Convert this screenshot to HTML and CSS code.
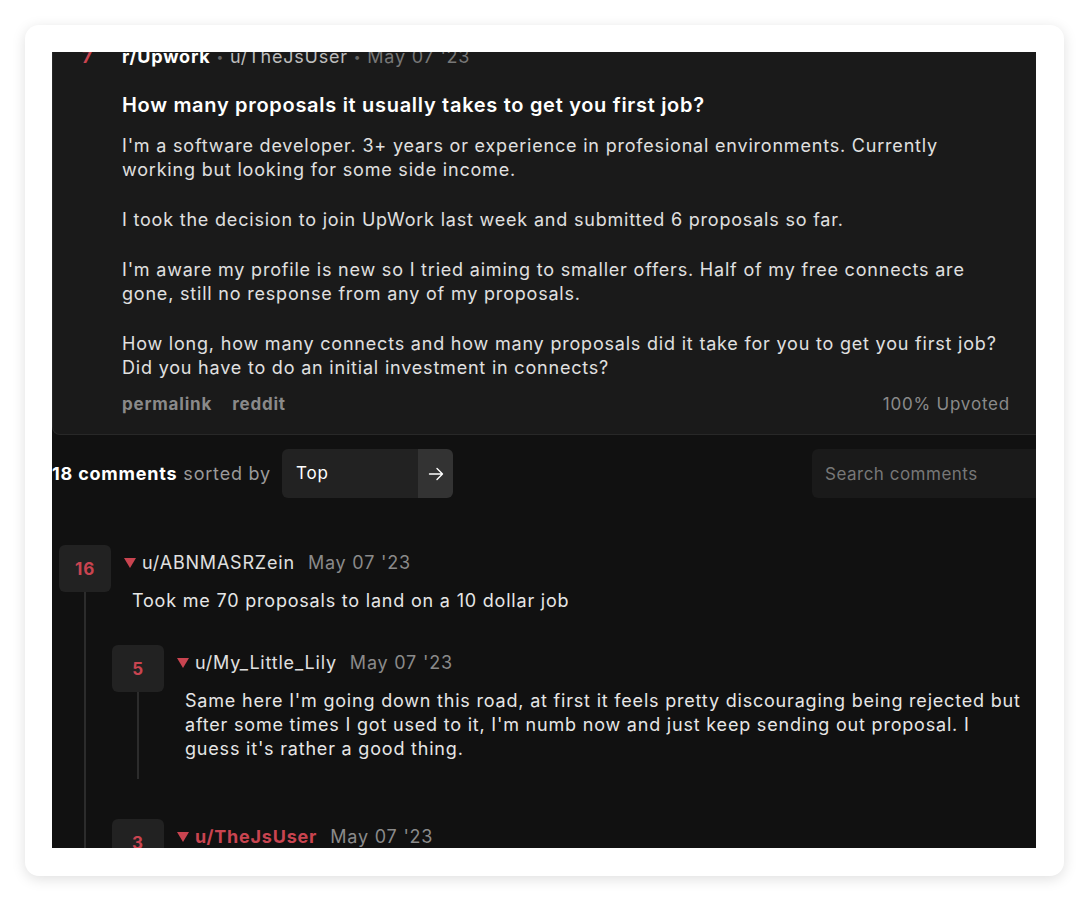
FILE: index.html
```html
<!DOCTYPE html>
<html>
  <head>
    <meta name="viewport" content="width=device-width, initial-scale=1.0" />
    <title>r/Upwork - How many proposals</title>
    <link rel="stylesheet" href="styles.css">
  </head>
  <body>
    <div class="frame">
      <div class="viewport">
        <div class="page">
          <article class="post">
            <div class="post-vote">7</div>
            <div class="post-main">
              <div class="post-meta">
                <span class="sub">r/Upwork</span>
                <span class="dot">•</span>
                <span class="author">u/TheJsUser</span>
                <span class="dot">•</span>
                <span class="date">May 07 '23</span>
              </div>
              <h1 class="post-title">How many proposals it usually takes to get you first job?</h1>
              <div class="post-body">
                <p>I'm a software developer. 3+ years or experience in profesional environments. Currently working but looking for some side income.</p>
                <p>I took the decision to join UpWork last week and submitted 6 proposals so far.</p>
                <p>I'm aware my profile is new so I tried aiming to smaller offers. Half of my free connects are gone, still no response from any of my proposals.</p>
                <p>How long, how many connects and how many proposals did it take for you to get you first job? Did you have to do an initial investment in connects?</p>
              </div>
              <div class="post-footer">
                <a href="#">permalink</a>
                <a href="#">reddit</a>
                <span class="ratio">100% Upvoted</span>
              </div>
            </div>
          </article>

          <div class="comments-bar">
            <span class="count"><b>18 comments</b> sorted by</span>
            <div class="sort">
              <div class="sort-value">Top</div>
              <div class="sort-btn">
                <svg width="18" height="18" viewBox="0 0 18 18" fill="none" stroke="#fff" stroke-width="1.4" stroke-linecap="round" stroke-linejoin="round">
                  <path d="M2.5 9h13M10 3.5L15.5 9 10 14.5" />
                </svg>
              </div>
            </div>
            <input class="search" placeholder="Search comments" />
          </div>

          <div class="comments">
            <div class="comment">
              <div class="vote-col">
                <div class="vote">16</div>
                <div class="thread-line"></div>
              </div>
              <div class="comment-main">
                <div class="comment-head">
                  <span class="caret"></span>
                  <span class="user">u/ABNMASRZein</span>
                  <span class="when">May 07 '23</span>
                </div>
                <div class="comment-body">Took me 70 proposals to land on a 10 dollar job</div>

                <div class="replies">
                  <div class="comment">
                    <div class="vote-col">
                      <div class="vote">5</div>
                      <div class="thread-line"></div>
                    </div>
                    <div class="comment-main">
                      <div class="comment-head">
                        <span class="caret"></span>
                        <span class="user">u/My_Little_Lily</span>
                        <span class="when">May 07 '23</span>
                      </div>
                      <div class="comment-body">Same here I'm going down this road, at first it feels pretty discouraging being rejected but after some times I got used to it, I'm numb now and just keep sending out proposal. I guess it's rather a good thing.</div>
                    </div>
                  </div>

                  <div class="comment">
                    <div class="vote-col">
                      <div class="vote">3</div>
                      <div class="thread-line"></div>
                    </div>
                    <div class="comment-main">
                      <div class="comment-head">
                        <span class="caret"></span>
                        <span class="user op">u/TheJsUser</span>
                        <span class="when">May 07 '23</span>
                      </div>
                      <div class="comment-body">Thanks, that's good to know. I guess I'll keep sending them then.</div>
                    </div>
                  </div>
                </div>
              </div>
            </div>
          </div>
        </div>
      </div>
    </div>
  </body>
</html>
```

FILE: styles.css
```css
body {
  margin: 0;
  background: #fff;
  font-family: Inter, "Noto Sans", sans-serif;
  font-size: 18px;
  letter-spacing: 0.8px;
  color: #e2e2e2;
}

.frame {
  margin: 25px;
  width: 984px;
  height: 796px;
  padding: 27px 28px 28px 27px;
  background: #fff;
  border-radius: 14px;
  box-shadow: 0 3px 14px rgba(0, 0, 0, 0.13);
}

.viewport {
  width: 984px;
  height: 796px;
  overflow: hidden;
  background: #111;
}

/* the page is scrolled a little, so the top of the post is cut */
.page {
  width: 1000px;
  margin-top: -23px;
}

.post {
  display: flex;
  background: #1a1a1a;
  border: 1px solid #282828;
  border-top: none;
  border-radius: 0 0 8px 8px;
  padding: 16px 41px 18px 0;
}

.post-vote {
  width: 69px;
  flex-shrink: 0;
  text-align: center;
  color: #c94450;
  font-weight: 700;
  line-height: 24px;
}

.post-main {
  flex-grow: 1;
}

.post-meta {
  line-height: 24px;
  color: #bdbdbd;
}
.post-meta .sub {
  color: #fff;
  font-weight: 700;
}
.post-meta .dot {
  color: #666;
  font-size: 12px;
  vertical-align: 2px;
}
.post-meta .date {
  color: #777;
}

.post-title {
  margin: 24px 0 0;
  font-size: 20px;
  font-weight: 600;
  letter-spacing: 0.7px;
  line-height: 24px;
  color: #fff;
}

.post-body {
  margin-top: 17px;
  max-width: 884px;
  line-height: 24px;
  color: #e0e0e0;
}
.post-body p {
  margin: 0 0 26px;
}
.post-body p:last-child {
  margin-bottom: 0;
}

.post-footer {
  display: flex;
  margin-top: 12px;
  line-height: 24px;
  color: #8a8a8a;
  font-size: 17px;
}
.post-footer a {
  color: #8a8a8a;
  font-weight: 700;
  text-decoration: none;
  margin-right: 20px;
}
.post-footer .ratio {
  margin-left: auto;
}

.comments-bar {
  display: flex;
  align-items: center;
  margin-top: 14px;
  height: 49px;
}
.count {
  color: #9a9a9a;
}
.count b {
  color: #fff;
}

.sort {
  display: flex;
  height: 49px;
  margin-left: 11px;
  border-radius: 6px;
  overflow: hidden;
}
.sort-value {
  width: 122px;
  padding-left: 14px;
  line-height: 49px;
  background: #222;
  color: #fff;
  font-size: 17px;
}
.sort-btn {
  width: 35px;
  background: #333;
  display: flex;
  align-items: center;
  justify-content: center;
}

.search {
  margin-left: auto;
  width: 240px;
  height: 49px;
  box-sizing: border-box;
  padding: 0 13px;
  border: none;
  border-radius: 6px;
  background: #1a1a1a;
  color: #ddd;
  font-family: inherit;
  font-size: 17px;
  letter-spacing: 0.5px;
  outline: none;
}
.search::placeholder {
  color: #777;
}

.comments {
  padding: 47px 0 0 7px;
}

.comment {
  display: grid;
  grid-template-columns: 52px 1fr;
  column-gap: 1px;
}

.vote-col {
  display: flex;
  flex-direction: column;
  align-items: center;
}
.vote {
  width: 52px;
  height: 47px;
  flex-shrink: 0;
  display: flex;
  align-items: center;
  justify-content: center;
  background: #222;
  border-radius: 6px;
  color: #c94450;
  font-weight: 700;
  font-size: 17px;
}
.thread-line {
  flex-grow: 1;
  width: 2px;
  background: #2c2c2c;
}

.comment-main {
  padding-bottom: 18px;
}

.comment-head {
  display: flex;
  align-items: center;
  padding: 6px 0 0 12px;
  line-height: 24px;
}
.caret {
  width: 0;
  height: 0;
  border-left: 6px solid transparent;
  border-right: 6px solid transparent;
  border-top: 10px solid #c94450;
  margin-right: 6px;
}
.user {
  color: #e0e0e0;
}
.user.op {
  color: #c94450;
  font-weight: 700;
}
.when {
  margin-left: 13px;
  color: #8a8a8a;
}

.comment-body {
  margin-top: 14px;
  padding-left: 20px;
  max-width: 840px;
  line-height: 24px;
  color: #e6e6e6;
}

.replies {
  margin-top: 32px;
}
.replies .comment + .comment {
  margin-top: 40px;
}
```
